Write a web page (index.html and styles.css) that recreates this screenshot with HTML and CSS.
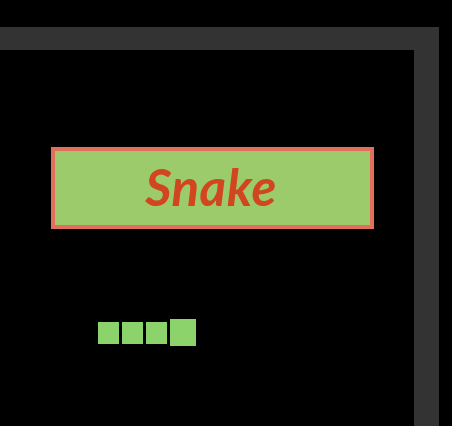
FILE: index.html
```html
<!DOCTYPE html>
<html>
<head>
<meta charset="utf-8">
<link rel="stylesheet" href="styles.css">
</head>
<body>
<div class="frame">
  <div class="title"><span class="title-text">Snake</span></div>
  <div class="snake">
    <div class="seg"></div>
    <div class="seg"></div>
    <div class="seg"></div>
    <div class="seg head"></div>
  </div>
</div>
</body>
</html>
```
FILE: styles.css
```css
html, body {
  margin: 0;
  padding: 0;
  background: #000;
  height: 100%;
  overflow: hidden;
}
.frame {
  margin-top: 27px;
  width: 414px;
  height: 279px;
  border-top: 23px solid #333333;
  border-right: 25px solid #333333;
  background: #000;
  padding-top: 97px;
}
.title {
  margin-left: 51px;
  width: 315px;
  height: 74px;
  border: 4px solid #e26f5b;
  background: #9ccb6b;
  display: flex;
  align-items: center;
  justify-content: center;
}
.title-text {
  font-family: Lato, "Open Sans", sans-serif;
  font-style: italic;
  font-weight: 700;
  font-size: 51px;
  color: #d1451f;
  line-height: 1;
  letter-spacing: 0.5px;
  margin-left: -3px;
  margin-top: -3px;
}
.snake {
  margin-top: 90px;
  margin-left: 98px;
  display: flex;
  align-items: center;
  gap: 3px;
}
.seg {
  width: 21px;
  height: 22px;
  background: #8dd36b;
}
.head {
  width: 26px;
  height: 27px;
}
```
